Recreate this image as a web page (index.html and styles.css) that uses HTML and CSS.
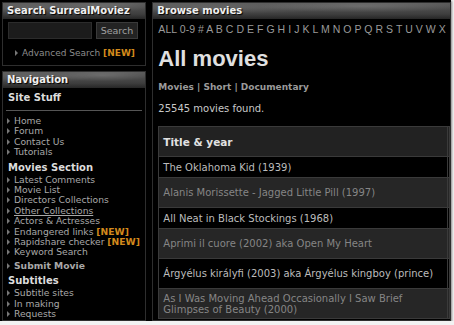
FILE: index.html
```html
<!DOCTYPE html>
<html lang="en">
<head>
    <meta charset="UTF-8">
    <title>SurrealMoviez - Browse movies</title>
    <link rel="stylesheet" href="styles.css">
</head>
<body>
    <div class="page">
        <div class="sidebar">
            <div class="box search-box">
                <div class="box-title">Search SurrealMoviez</div>
                <div class="search-row">
                    <input type="text" class="search-input">
                    <button class="search-button">Search</button>
                </div>
                <div class="adv-search"><span class="bullet"></span>Advanced Search <span class="new">[NEW]</span></div>
            </div>

            <div class="box nav-box">
                <div class="box-title">Navigation</div>
                <div class="nav-heading">Site Stuff</div>
                <div class="nav-rule"></div>
                <ul class="nav-list first">
                    <li><span class="bullet"></span>Home</li>
                    <li><span class="bullet"></span>Forum</li>
                    <li><span class="bullet"></span>Contact Us</li>
                    <li><span class="bullet"></span>Tutorials</li>
                </ul>
                <div class="nav-heading">Movies Section</div>
                <ul class="nav-list">
                    <li><span class="bullet"></span>Latest Comments</li>
                    <li><span class="bullet"></span>Movie List</li>
                    <li><span class="bullet"></span>Directors Collections</li>
                    <li><span class="bullet"></span><span class="hover">Other Collections</span></li>
                    <li><span class="bullet"></span>Actors &amp; Actresses</li>
                    <li><span class="bullet"></span>Endangered links <span class="new">[NEW]</span></li>
                    <li><span class="bullet"></span>Rapidshare checker <span class="new">[NEW]</span></li>
                    <li><span class="bullet"></span>Keyword Search</li>
                </ul>
                <ul class="nav-list submit">
                    <li><span class="bullet"></span><b>Submit Movie</b></li>
                </ul>
                <div class="nav-heading">Subtitles</div>
                <ul class="nav-list">
                    <li><span class="bullet"></span>Subtitle sites</li>
                    <li><span class="bullet"></span>In making</li>
                    <li><span class="bullet"></span>Requests</li>
                </ul>
            </div>
        </div>

        <div class="box main-box">
            <div class="box-title">Browse movies</div>
            <div class="letters">ALL 0-9 # A B C D E F G H I J K L M N O P Q R S T U V W X</div>
            <h1 class="main-title">All movies</h1>
            <div class="types">Movies | Short | Documentary</div>
            <div class="found">25545 movies found.</div>

            <table class="movies">
                <tr class="head"><th>Title &amp; year</th><th></th></tr>
                <tr class="dark"><td>The Oklahoma Kid (1939)</td><td></td></tr>
                <tr class="grey tall"><td>Alanis Morissette - Jagged Little Pill (1997)</td><td></td></tr>
                <tr class="dark"><td>All Neat in Black Stockings (1968)</td><td></td></tr>
                <tr class="grey tall"><td>Aprimi il cuore (2002) aka Open My Heart</td><td></td></tr>
                <tr class="dark tall"><td>Árgyélus királyfi (2003) aka Árgyélus kingboy (prince)</td><td></td></tr>
                <tr class="grey tall"><td>As I Was Moving Ahead Occasionally I Saw Brief<br>Glimpses of Beauty (2000)</td><td></td></tr>
            </table>
        </div>
    </div>
</body>
</html>
```

FILE: styles.css
```css
html {
    background: #f2f2f2;
}

body {
    margin: 0;
    font-family: "DejaVu Sans", Verdana, sans-serif;
    font-size: 9px;
    color: #a8a8a8;
}

.page {
    width: 451px;
    height: 321px;
    background: #000000;
    display: flex;
    gap: 6px;
    padding: 2px 0 0 2px;
    box-sizing: border-box;
    overflow: hidden;
    box-shadow: 1px 1px 2px #888;
}

.sidebar {
    width: 145px;
    display: flex;
    flex-direction: column;
    gap: 5px;
}

.box {
    border: 1px solid #2e2e2e;
    background: #000000;
}

.box-title {
    height: 16px;
    line-height: 15px;
    padding-left: 4px;
    font-weight: bold;
    font-size: 10px;
    color: #f0f0f0;
    text-shadow: 1px 1px 1px #000;
    background:
        radial-gradient(ellipse at 20% 30%, rgba(255,255,255,0.12), transparent 40%),
        radial-gradient(ellipse at 70% 20%, rgba(255,255,255,0.15), transparent 35%),
        linear-gradient(to bottom, #5a5a5a, #3e3e3e 70%, #262626);
}

/* search */
.search-box {
    height: 62px;
    flex: none;
}

.search-row {
    display: flex;
    gap: 4px;
    padding: 3px 0 0 5px;
}

.search-input {
    width: 84px;
    height: 17px;
    box-sizing: border-box;
    margin: 0;
    background: #1c1c1c;
    border: 1px solid #2c2c2c;
}

.search-button {
    width: 42px;
    height: 17px;
    margin: 0;
    padding: 0;
    background: #232323;
    border: 1px solid #3a3a3a;
    color: #a0a0a0;
    font-family: "DejaVu Sans", Verdana, sans-serif;
    font-size: 9.5px;
}

.adv-search {
    margin-top: 9px;
    padding-left: 12px;
    color: #8c8c8c;
}

.new {
    color: #d38a1c;
    font-weight: bold;
}

.bullet {
    display: inline-block;
    width: 0;
    height: 0;
    border-left: 3px solid #777;
    border-top: 3px solid transparent;
    border-bottom: 3px solid transparent;
    margin-right: 4px;
    vertical-align: 0;
}

/* navigation */
.nav-box {
    flex: 1;
    margin-bottom: 1px;
}

.nav-heading {
    padding: 4px 0 0 5px;
    font-weight: bold;
    font-size: 10px;
    color: #dcdcdc;
    line-height: 12px;
}

.nav-rule {
    margin: 6px 3px 0 3px;
    border-top: 1px solid #555;
}

.nav-list {
    list-style: none;
    margin: 1px 0 0 0;
    padding: 0 0 0 4px;
    line-height: 10.4px;
    font-size: 9.2px;
}

.nav-list li {
    white-space: nowrap;
}

.nav-list.first {
    margin-top: 5px;
}

.nav-list.submit {
    margin-top: 3px;
}

.hover {
    text-decoration: underline;
}

/* main */
.main-box {
    width: 298px;
    height: 317px;
    overflow: hidden;
}

.letters {
    padding: 4px 0 0 5px;
    white-space: nowrap;
    font-size: 10.5px;
    color: #9a9a9a;
    font-family: "Liberation Sans", Arial, sans-serif;
    letter-spacing: 0.05px;
}

.main-title {
    margin: 12px 0 0 5px;
    font-family: "Liberation Sans", Arial, sans-serif;
    font-size: 22px;
    color: #e0e0e0;
    line-height: 24px;
}

.types {
    margin: 11px 0 0 5px;
    font-weight: bold;
    font-size: 9px;
    color: #9a9a9a;
}

.found {
    margin: 11px 0 0 5px;
    color: #c8c8c8;
    font-size: 10px;
}

.movies {
    margin: 12px 0 0 5px;
    width: 292px;
    border-collapse: collapse;
    border: 1px solid #3a3a3a;
    font-size: 10px;
}

.movies th,
.movies td {
    border: 1px solid #3a3a3a;
    text-align: left;
    padding: 3px 4px;
    height: 14px;
    vertical-align: middle;
}

.movies th:last-child,
.movies td:last-child {
    width: 1px;
    padding: 0;
}

.movies .head th {
    background: #222222;
    color: #e2e2e2;
    font-size: 10.5px;
    height: 23px;
}

.movies .dark td {
    background: #000000;
    color: #bcbcbc;
}

.movies .grey td {
    background: #262626;
    color: #858585;
}

.movies .tall td {
    height: 23px;
}
```
